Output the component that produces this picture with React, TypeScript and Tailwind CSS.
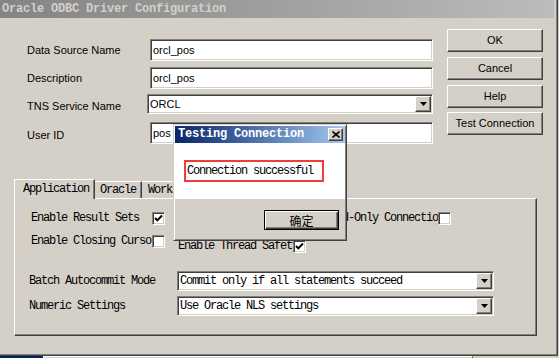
import React from "react";

const sunken =
  "bg-white border border-t-[#808080] border-l-[#808080] border-b-white border-r-white shadow-[inset_1px_1px_0_#404040,inset_-1px_-1px_0_#d4d0c8]";
const raised =
  "bg-[#d4d0c8] border border-t-white border-l-white border-b-[#404040] border-r-[#404040] shadow-[inset_-1px_-1px_0_#808080]";
const mono = "font-['Liberation_Mono',monospace] text-[12px] tracking-[-1.2px] leading-[13px]";

function Arrow() {
  return (
    <svg width="7" height="4" viewBox="0 0 7 4">
      <path d="M0 0h7L3.5 4z" fill="#000" />
    </svg>
  );
}

function DropButton() {
  return (
    <div className={`${raised} w-[16px] h-[16px] flex items-center justify-center shrink-0`}>
      <Arrow />
    </div>
  );
}

function Check({ on }: { on?: boolean }) {
  return (
    <div className={`${sunken} w-[13px] h-[13px] shrink-0 flex items-center justify-center`}>
      {on && (
        <svg width="9" height="9" viewBox="0 0 9 9">
          <polyline points="1,4 3.3,6.4 8,1.5" fill="none" stroke="#000" strokeWidth="2" />
        </svg>
      )}
    </div>
  );
}

function Field({ value }: { value: string }) {
  return (
    <div className={`${sunken} w-[283px] h-[22px] flex items-center pl-[2px]`}>
      <span>{value}</span>
    </div>
  );
}

function Button({ label }: { label: string }) {
  return (
    <div className={`${raised} w-[96px] h-[23px] flex items-center justify-center`}>
      {label}
    </div>
  );
}

function Combo({ value, width, className = "" }: { value: string; width: string; className?: string }) {
  return (
    <div className={`${sunken} ${width} h-[20px] flex items-center pl-[2px] pr-[1px] ${className}`}>
      <span className="flex-1 truncate">{value}</span>
      <DropButton />
    </div>
  );
}

function CheckRow({ label, width, on }: { label: string; width: string; on?: boolean }) {
  return (
    <div className="flex items-center h-[13px]">
      <span className={`${width} overflow-hidden whitespace-nowrap`}>{label}</span>
      <Check on={on} />
    </div>
  );
}

export default function App() {
  return (
    <div className="relative w-[559px] h-[358px] overflow-hidden bg-[#d4d0c8] font-['Liberation_Sans',Arial,sans-serif] text-[11px] leading-[13px] text-black">
      {/* main window */}
      <div className="flex flex-col w-[558px] h-[356px] border-r border-b border-r-[#404040] border-b-[#404040] shadow-[inset_-1px_-1px_0_#808080]">
        <div className="h-[18px] mr-[3px] flex items-center pl-[2px] bg-linear-to-r from-[#848484] to-[#bcbcbc]">
          <span className="font-['Liberation_Mono',monospace] font-bold text-[12px] tracking-[-0.2px] text-[#d4d0c8]">
            Oracle ODBC Driver Configuration
          </span>
        </div>

        <div className="flex">
          <div className="w-[433px] shrink-0 flex flex-col pl-[27px] pt-[21px]">
            <div className="flex items-center">
              <span className="w-[123px]">Data Source Name</span>
              <Field value="orcl_pos" />
            </div>
            <div className="flex items-center mt-[6px]">
              <span className="w-[123px]">Description</span>
              <Field value="orcl_pos" />
            </div>
            <div className="flex items-center mt-[5px]">
              <span className="w-[123px] pt-[4px]">TNS Service Name</span>
              <Combo value="ORCL" width="w-[286px]" className="shrink-0" />
            </div>
            <div className="flex items-center mt-[8px]">
              <span className="w-[123px] pt-[5px]">User ID</span>
              <Field value="pos" />
            </div>
          </div>
          <div className="flex flex-col ml-[14px] pt-[11px]">
            <Button label="OK" />
            <div className="mt-[5px]"><Button label="Cancel" /></div>
            <div className="mt-[5px]"><Button label="Help" /></div>
            <div className="mt-[4px]"><Button label="Test Connection" /></div>
          </div>
        </div>

        {/* tabs */}
        <div className={`${mono} mt-[35px] ml-[14px]`}>
          <div className="flex items-end h-[19px]">
            <div className="relative z-10 h-[20px] mb-[-1px] w-[81px] bg-[#d4d0c8] border-t border-l border-t-white border-l-white border-r border-r-[#404040] shadow-[inset_-1px_0_0_#808080] pl-[8px] pt-[3px]">
              Application
            </div>
            <div className="h-[17px] w-[47px] border-t border-t-white border-r border-r-[#404040] shadow-[inset_-1px_0_0_#808080] pl-[5px] pt-[2px]">
              Oracle
            </div>
            <div className="h-[17px] w-[78px] border-t border-t-white border-r border-r-[#404040] shadow-[inset_-1px_0_0_#808080] pl-[6px] pt-[2px]">
              Workarounds
            </div>
          </div>
          <div className="w-[523px] h-[138px] border border-t-white border-l-white border-b-[#404040] border-r-[#404040] shadow-[inset_-1px_-1px_0_#808080] pt-[13px]">
            <div className="flex items-center pl-[16px]">
              <CheckRow label="Enable Result Sets" width="w-[121px]" on />
              <div className="ml-[159px]">
                <CheckRow label="Read-Only Connection" width="w-[114px]" />
              </div>
            </div>
            <div className="flex items-start pl-[16px] mt-[10px]">
              <CheckRow label="Enable Closing Cursors" width="w-[121px]" />
              <div className="ml-[13px] mt-[5px]">
                <CheckRow label="Enable Thread Safety" width="w-[115px]" on />
              </div>
            </div>
            <div className="flex items-center pl-[14px] mt-[18px]">
              <span className="w-[148px]">Batch Autocommit Mode</span>
              <Combo value="Commit only if all statements succeed" width="w-[317px]" />
            </div>
            <div className="flex items-center pl-[14px] mt-[5px]">
              <span className="w-[148px]">Numeric Settings</span>
              <Combo value="Use Oracle NLS settings" width="w-[317px]" />
            </div>
          </div>
        </div>
      </div>

      {/* taskbar peeking in below */}
      <div className="flex h-[2px]">
        <div className="w-[43px] bg-[#0a246a]" />
        <div className="w-[430px] border-l border-l-white border-r border-r-[#404040] border-t border-t-white bg-[#d4d0c8]" />
      </div>

      {/* Testing Connection message box */}
      <div className="absolute left-[173px] top-[124px] w-[174px] h-[117px] flex flex-col p-[1px] bg-[#d4d0c8] border border-t-[#d4d0c8] border-l-[#d4d0c8] border-b-[#404040] border-r-[#404040] shadow-[inset_1px_1px_0_#ffffff,inset_-1px_-1px_0_#808080]">
        <div className="h-[17px] flex items-center pl-[3px] bg-linear-to-r from-[#0a246a] to-[#a6caf0]">
          <span className="font-['Liberation_Mono',monospace] font-bold text-[12px] tracking-[-0.2px] text-white">
            Testing Connection
          </span>
          <div className={`${raised} ml-auto mr-[2px] w-[15px] h-[13px] flex items-center justify-center`}>
            <svg width="8" height="7" viewBox="0 0 8 7">
              <path d="M0.5 0.5L7.5 6.5M7.5 0.5L0.5 6.5" stroke="#000" strokeWidth="1.6" />
            </svg>
          </div>
        </div>
        <div className="h-[56px] bg-white pt-[17px] pl-[9px]">
          <div className={`${mono} w-[140px] h-[22px] border-2 border-[#f23c3c] flex items-center pl-[1px]`}>
            Connection successful
          </div>
        </div>
        <div className="flex justify-end pr-[6px] pt-[11px]">
          <div className="w-[75px] h-[20px] border border-black bg-[#d4d0c8] shadow-[inset_1px_1px_0_#ffffff,inset_-1px_-1px_0_#404040,inset_-2px_-2px_0_#808080] flex items-center justify-center font-['Noto_Sans_CJK_SC','Noto_Sans',sans-serif] text-[12px]">
            确定
          </div>
        </div>
      </div>
    </div>
  );
}
